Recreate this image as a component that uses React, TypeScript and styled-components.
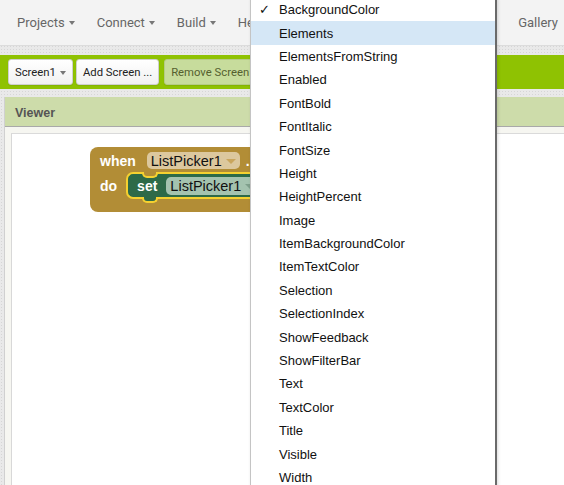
import styled, { createGlobalStyle } from "styled-components";

const GlobalStyle = createGlobalStyle`
  html, body {
    margin: 0;
    padding: 0;
    width: 100%;
    height: 100%;
    overflow: hidden;
  }
  body {
    background-color: #e9e9e9;
    background-image: radial-gradient(#d6d6d6 0.6px, transparent 0.8px);
    background-size: 3px 3px;
    font-family: "Liberation Sans", Arial, sans-serif;
  }
  #root {
    height: 100%;
  }
`;

const properties = [
  "BackgroundColor",
  "Elements",
  "ElementsFromString",
  "Enabled",
  "FontBold",
  "FontItalic",
  "FontSize",
  "Height",
  "HeightPercent",
  "Image",
  "ItemBackgroundColor",
  "ItemTextColor",
  "Selection",
  "SelectionIndex",
  "ShowFeedback",
  "ShowFilterBar",
  "Text",
  "TextColor",
  "Title",
  "Visible",
  "Width",
];

const navItems = ["Projects", "Connect", "Build", "Help"];

export default function App() {
  return (
    <>
      <GlobalStyle />
      <Page>
        <TopNav>
          <NavLeft>
            {navItems.map((item) => (
              <NavItem key={item}>
                {item}
                <Caret />
              </NavItem>
            ))}
          </NavLeft>
          <NavRight>
            <NavItem>Gallery</NavItem>
          </NavRight>
        </TopNav>

        <Toolbar>
          <ToolButton>
            Screen1
            <Caret />
          </ToolButton>
          <ToolButton>Add Screen ...</ToolButton>
          <ToolButton $muted>Remove Screen</ToolButton>
        </Toolbar>

        <ViewerPanel>
          <ViewerHeader>Viewer</ViewerHeader>
          <ViewerBody>
            <Canvas>
              <EventBlock>
                <BlockRow>
                  <Keyword>when</Keyword>
                  <EventPill>
                    ListPicker1
                    <PillCaret $color="#c9a65e" />
                  </EventPill>
                  <Keyword>.</Keyword>
                </BlockRow>
                <BlockRow $gap={9}>
                  <Keyword>do</Keyword>
                  <SetBlock>
                    <Keyword>set</Keyword>
                    <SetPill>
                      ListPicker1
                      <PillCaret $color="#7fa08c" />
                    </SetPill>
                  </SetBlock>
                </BlockRow>
              </EventBlock>
            </Canvas>
          </ViewerBody>
        </ViewerPanel>

        <DropMenu>
          {properties.map((name, i) => (
            <MenuItem key={name} $active={i === 1}>
              {i === 0 && <Check>✓</Check>}
              {name}
            </MenuItem>
          ))}
        </DropMenu>
      </Page>
    </>
  );
}

const Page = styled.div`
  position: relative;
  height: 100%;
  display: flex;
  flex-direction: column;
`;

const TopNav = styled.nav`
  height: 45px;
  flex-shrink: 0;
  background: #f3f3f3;
  border-bottom: 1px solid #dcdcdc;
  display: flex;
  align-items: center;
  justify-content: space-between;
  padding: 0 6px 0 17px;
  font-family: Roboto, "Liberation Sans", sans-serif;
`;

const NavLeft = styled.div`
  display: flex;
  gap: 22px;
`;

const NavRight = styled.div`
  display: flex;
`;

const NavItem = styled.span`
  font-size: 13px;
  color: #666;
  display: flex;
  align-items: center;
  gap: 4px;
`;

const Caret = styled.span`
  width: 0;
  height: 0;
  border-left: 3.5px solid transparent;
  border-right: 3.5px solid transparent;
  border-top: 4px solid #777;
  margin-top: 1px;
`;

const Toolbar = styled.div`
  margin-top: 9px;
  height: 34px;
  flex-shrink: 0;
  background: #8fc202;
  display: flex;
  align-items: center;
  gap: 3px;
  padding: 0 8px;
`;

const ToolButton = styled.button<{ $muted?: boolean }>`
  height: 26px;
  padding: 0 6px;
  display: flex;
  align-items: center;
  gap: 4px;
  font-family: Roboto, "Liberation Sans", sans-serif;
  font-size: 11.3px;
  color: ${(p) => (p.$muted ? "#55602f" : "#222")};
  background: ${(p) =>
    p.$muted ? "#c7dc9c" : "linear-gradient(#ffffff, #f1f1f1)"};
  border: 1px solid ${(p) => (p.$muted ? "#b5cb86" : "#cfcfcf")};
  border-radius: 3px;
  box-shadow: 0 1px 1px rgba(0, 0, 0, 0.08);
  margin-left: ${(p) => (p.$muted ? "2px" : "0")};
`;

const ViewerPanel = styled.section`
  margin: 8px 0 0 4px;
  flex: 1;
  display: flex;
  flex-direction: column;
  border-left: 1px solid #d0d0d0;
`;

const ViewerHeader = styled.div`
  height: 30px;
  background: #cddcaa;
  border-bottom: 1px solid #a9a9a9;
  display: flex;
  align-items: center;
  padding: 2px 0 0 10px;
  box-sizing: border-box;
  font-size: 12.5px;
  font-weight: bold;
  color: #555;
`;

const ViewerBody = styled.div`
  flex: 1;
  background: #f6f6f1;
  padding: 6px 0 0 6px;
  display: flex;
`;

const Canvas = styled.div`
  position: relative;
  flex: 1;
  background: #ffffff;
  border-left: 1px solid #d8d8d8;
  border-top: 1px solid #dadada;
`;

const EventBlock = styled.div`
  position: absolute;
  left: 78px;
  top: 13px;
  width: 300px;
  height: 65px;
  box-sizing: border-box;
  background: #b28d36;
  border-radius: 8px;
  padding: 5px 0 0 10px;
  display: flex;
  flex-direction: column;
  gap: 3px;
`;

const BlockRow = styled.div<{ $gap?: number }>`
  display: flex;
  align-items: center;
  gap: ${(p) => p.$gap ?? 11}px;
`;

const Keyword = styled.span`
  font-family: "Liberation Sans", Arial, sans-serif;
  font-weight: bold;
  font-size: 14px;
  color: #ffffff;
`;

const EventPill = styled.span`
  height: 17px;
  display: flex;
  align-items: center;
  gap: 4px;
  padding: 0 4px;
  border-radius: 5px;
  background: #dcc89e;
  color: #111;
  font-size: 14.5px;
  font-family: "Liberation Sans", Arial, sans-serif;
  margin-right: -5px;
`;

const PillCaret = styled.span<{ $color: string }>`
  width: 0;
  height: 0;
  border-left: 5px solid transparent;
  border-right: 5px solid transparent;
  border-top: 5px solid ${(p) => p.$color};
  margin-top: 2px;
`;

const SetBlock = styled.div`
  position: relative;
  height: 23px;
  width: 200px;
  display: flex;
  align-items: center;
  gap: 9px;
  padding-left: 9px;
  background: #2d6a48;
  border: 2px solid #f5d130;
  border-right: none;
  border-radius: 7px 0 0 7px;

  &::before {
    content: "";
    position: absolute;
    top: -2px;
    left: 14px;
    width: 12px;
    height: 4px;
    background: #b28d36;
    border: 2px solid #f5d130;
    border-top: none;
    border-radius: 0 0 5px 5px;
  }

  &::after {
    content: "";
    position: absolute;
    bottom: -6px;
    left: 14px;
    width: 12px;
    height: 4px;
    background: #2d6a48;
    border: 2px solid #f5d130;
    border-top: none;
    border-radius: 0 0 5px 5px;
  }
`;

const SetPill = styled(EventPill)`
  background: #a4c3af;
  height: 18px;
  margin-right: 0;
`;

const DropMenu = styled.ul`
  position: absolute;
  left: 250px;
  top: -2px;
  width: 244px;
  height: 500px;
  margin: 0;
  padding: 0;
  list-style: none;
  background: #ffffff;
  border-left: 1px solid #c4c4c4;
  border-right: 2px solid #6a6a6a;
  box-shadow: 1px 0 3px rgba(0, 0, 0, 0.15);
`;

const MenuItem = styled.li<{ $active?: boolean }>`
  position: relative;
  height: 23.4px;
  display: flex;
  align-items: center;
  padding-left: 28px;
  font-family: "Liberation Sans", Arial, sans-serif;
  font-size: 13px;
  color: #111;
  background: ${(p) => (p.$active ? "#d5e7f6" : "transparent")};
`;

const Check = styled.span`
  position: absolute;
  left: 8px;
  font-size: 13px;
  color: #111;
`;
